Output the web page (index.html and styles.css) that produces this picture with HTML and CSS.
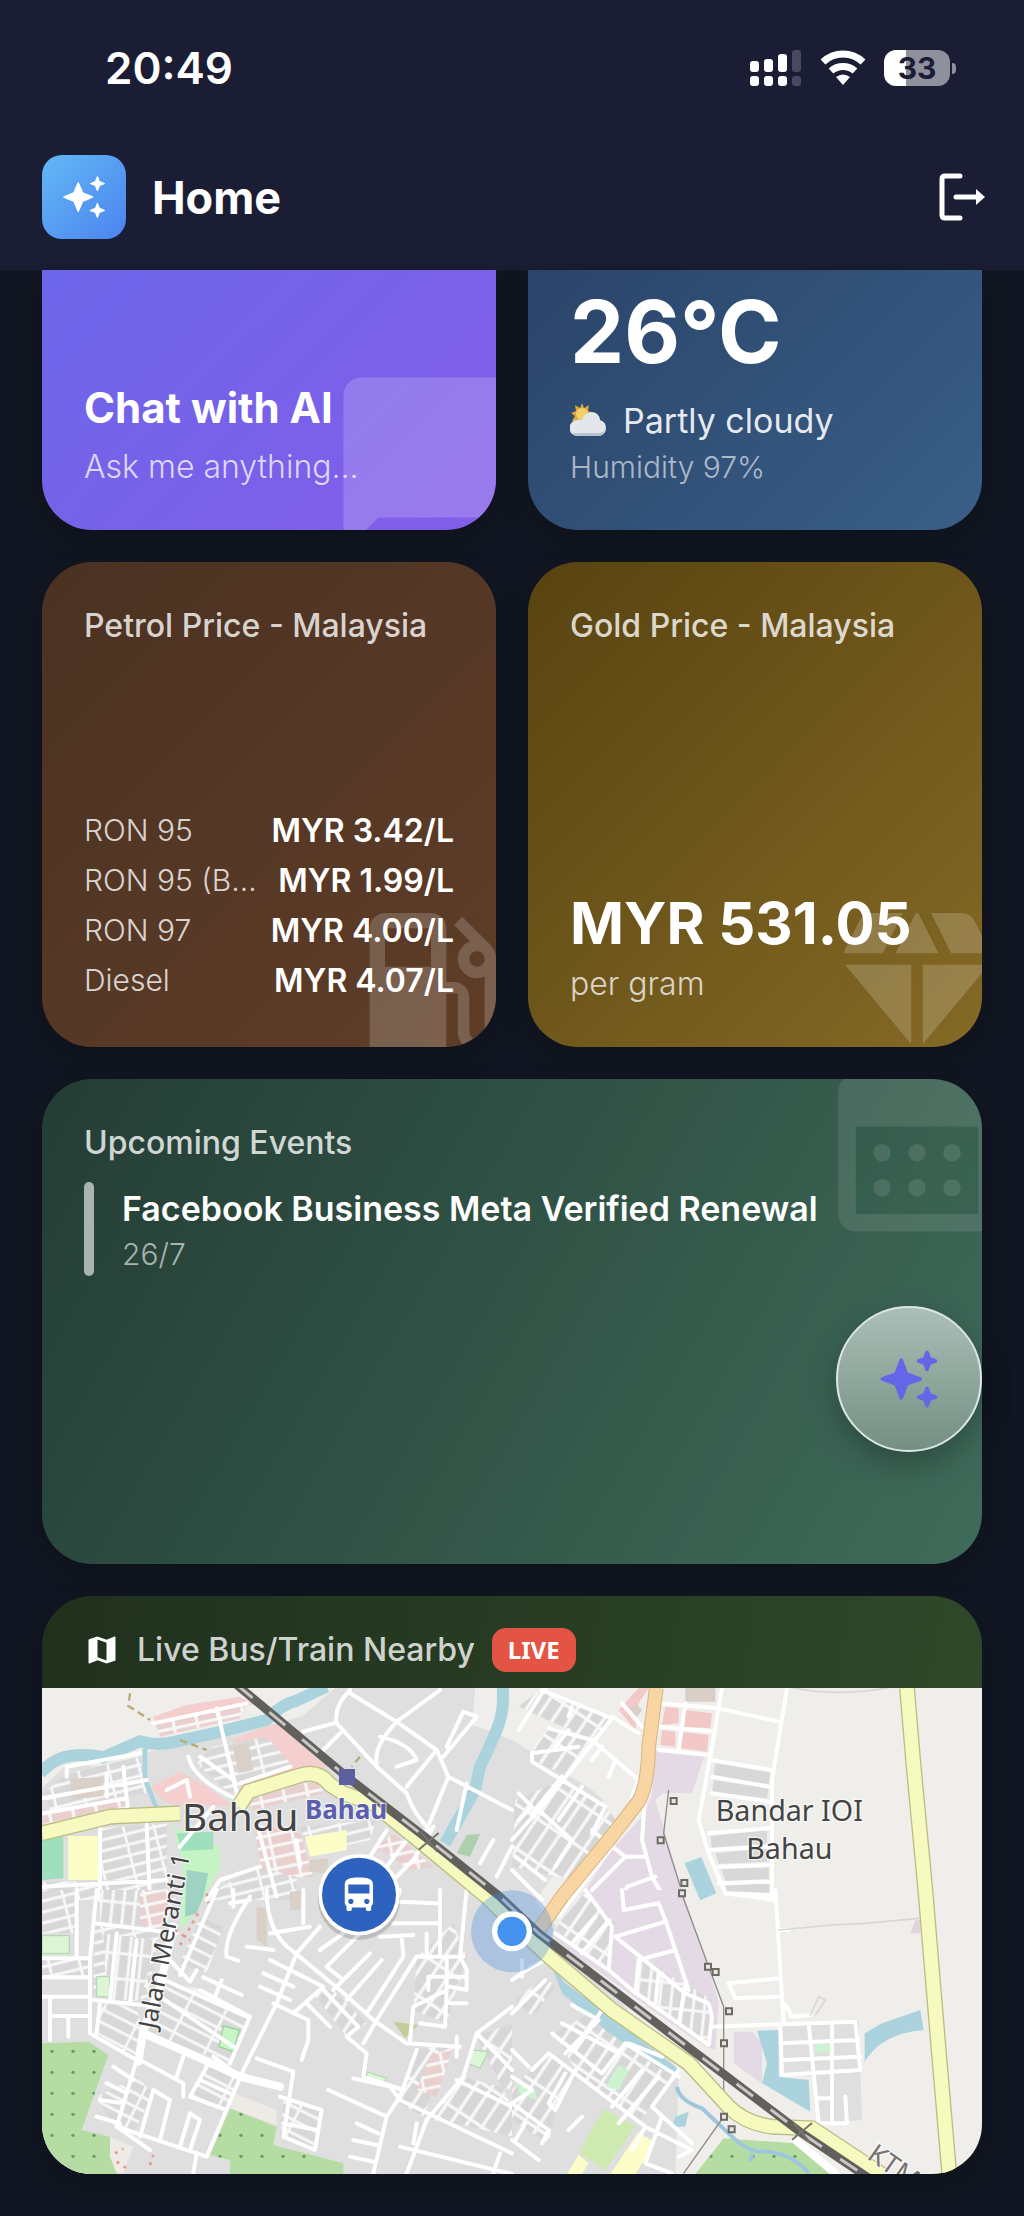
FILE: index.html
```html
<!DOCTYPE html>
<html lang="en">
<head>
  <meta charset="UTF-8">
  <meta name="viewport" content="width=device-width, initial-scale=1">
  <title>Home</title>
  <link rel="stylesheet" href="styles.css">
</head>
<body>

<header class="topbar">
  <div class="status">
    <span class="clock">20:49</span>
    <div class="status-icons">
      <svg width="52" height="36" viewBox="0 0 52 36">
        <g fill="#fff">
          <rect x="0" y="11" width="9" height="11" rx="3"/><rect x="14" y="9" width="9" height="13" rx="3"/><rect x="28" y="4" width="9" height="18" rx="3"/>
          <rect x="0" y="26" width="9" height="10" rx="3"/><rect x="14" y="26" width="9" height="10" rx="3"/><rect x="28" y="26" width="9" height="10" rx="3"/>
        </g>
        <g fill="#474960"><rect x="42" y="0" width="9" height="22" rx="3"/><rect x="42" y="26" width="9" height="10" rx="3"/></g>
      </svg>
      <svg width="46" height="36" viewBox="0 0 46 36">
        <g fill="none" stroke="#fff" stroke-width="7"><path d="M3 12a29 29 0 0 1 40 0"/><path d="M11 21a18 18 0 0 1 24 0"/></g>
        <path fill="#fff" d="M16 27q7-5 14 0l-7 8z"/>
      </svg>
      <div class="battery"><span>33</span></div>
    </div>
  </div>
  <nav class="nav">
    <div class="logo">
      <svg width="46" height="46" viewBox="0 0 24 24"><use href="#sparkles"/></svg>
    </div>
    <h1>Home</h1>
    <button class="logout" aria-label="Log out">
      <svg width="48" height="50" viewBox="0 0 48 50">
        <path d="M22 4H7Q4 4 4 7v36q0 3 3 3h15M18 25h20" fill="none" stroke="#fff" stroke-width="5" stroke-linecap="round"/>
        <path d="M38 17l9 8-9 8z" fill="#fff"/>
      </svg>
    </button>
  </nav>
</header>

<main class="cards">
  <section class="card under-bar chat">
    <svg class="mark big" viewBox="0 0 24 24"><path d="M20 2H4c-1.100 0-2 .9-2 2v18l4-4h14c1.100 0 2-.9 2-2V4c0-1.100-.9-2-2-2z"/></svg>
    <div class="foot">
      <h2 class="name">Chat with AI</h2>
      <p class="sub">Ask me anything...</p>
    </div>
  </section>

  <section class="card under-bar weather">
    <div class="foot">
      <p class="temp">26°C</p>
      <p class="sky">
        <svg width="36" height="36" viewBox="0 0 36 36">
          <path d="M12 0l2 5 5-3-1 6 6 2-5 3 2 5H8l-6 0 3-5-4-3 5-2-1-6 5 3z" fill="#d9a93f"/>
          <circle cx="12" cy="11" r="6" fill="#f6cf68"/>
          <path d="M8 33a8 8 0 0 1-1-16q3-1 5 0 2-7 9-8 8 0 9 8 6 2 6 8t-7 8z" fill="#e3e6ea"/>
          <path d="M2 29q3 4 8 4h18q6 0 8-6-3 3-8 3H9q-4 1-7-1z" fill="#b9c2cf"/>
        </svg>
        Partly cloudy
      </p>
      <p class="humidity">Humidity 97%</p>
    </div>
  </section>

  <section class="card petrol">
    <svg class="mark" viewBox="0 0 24 24"><path d="M19.770 7.230l.01-.01-3.720-3.720L15 4.560l2.110 2.110c-.94.36-1.610 1.260-1.610 2.330 0 1.380 1.120 2.500 2.500 2.500.36 0 .69-.08 1-.21v7.210c0 .55-.45 1-1 1s-1-.45-1-1V14c0-1.100-.9-2-2-2h-1V5c0-1.100-.9-2-2-2H6c-1.100 0-2 .9-2 2v16h10v-7.500h1.500v5c0 1.380 1.120 2.500 2.500 2.500s2.500-1.120 2.500-2.500V9c0-.69-.28-1.320-.73-1.770zM12 10H6V5h6v5zm6 0c-.55 0-1-.45-1-1s.45-1 1-1 1 .45 1 1-.45 1-1 1z"/></svg>
    <h2 class="title">Petrol Price - Malaysia</h2>
    <dl class="foot prices">
      <div><dt>RON 95</dt><dd>MYR 3.42/L</dd></div>
      <div><dt>RON 95 (B...</dt><dd>MYR 1.99/L</dd></div>
      <div><dt>RON 97</dt><dd>MYR 4.00/L</dd></div>
      <div><dt>Diesel</dt><dd>MYR 4.07/L</dd></div>
    </dl>
  </section>

  <section class="card gold">
    <svg class="mark" viewBox="0 0 24 24"><path d="M12.160 3h-.32L9.210 8.250h5.580zM16.460 8.250h5.160L19.550 4.110C19.210 3.430 18.520 3 17.760 3h-3.930zM21.380 9.750h-8.630V20.100zM11.250 20.100V9.750H2.620zM7.540 8.250L10.160 3H6.240c-.76 0-1.450.43-1.790 1.110L2.380 8.250z"/></svg>
    <h2 class="title">Gold Price - Malaysia</h2>
    <div class="foot">
      <p class="amount">MYR 531.05</p>
      <p class="sub">per gram</p>
    </div>
  </section>

  <section class="card wide events">
    <svg class="mark big top" viewBox="0 0 24 24"><path fill-rule="evenodd" d="M5 4h14a2 2 0 0 1 2 2v14a2 2 0 0 1-2 2H5a2 2 0 0 1-2-2V6a2 2 0 0 1 2-2zM5 10v10h14V10z"/><circle cx="8" cy="13" r="1"/><circle cx="12" cy="13" r="1"/><circle cx="16" cy="13" r="1"/><circle cx="8" cy="17" r="1"/><circle cx="12" cy="17" r="1"/><circle cx="16" cy="17" r="1"/></svg>
    <h2 class="title">Upcoming Events</h2>
    <div class="event">
      <h3>Facebook Business Meta Verified Renewal</h3>
      <p>26/7</p>
    </div>
  </section>

  <section class="card wide live">
    <div class="live-head">
      <svg width="36" height="36" viewBox="0 0 24 24"><path fill="#fff" d="M20.500 3l-.16.03L15 5.100 9 3 3.360 4.900c-.21.07-.36.25-.36.48V20.500c0 .28.22.5.5.5l.16-.03L9 18.900l6 2.100 5.640-1.900c.21-.07.36-.25.36-.48V3.500c0-.28-.22-.5-.5-.5zM15 19l-6-2.110V5l6 2.110V19z"/></svg>
      <h2 class="title">Live Bus/Train Nearby</h2>
      <span class="badge">LIVE</span>
    </div>

    <svg class="map" viewBox="0 0 2820 1458" preserveAspectRatio="xMidYMid slice" role="img" aria-label="Map of Bahau">
      <defs>
        <!-- rows of terraced houses -->
        <pattern id="rows" width="90" height="32" patternUnits="userSpaceOnUse" patternTransform="rotate(-14)"><rect width="90" height="32" fill="#f8f8f8"/><rect x="3" y="4" width="82" height="23" fill="#d9d8d8"/></pattern>
        <pattern id="slant" width="110" height="36" patternUnits="userSpaceOnUse" patternTransform="rotate(27)"><rect width="110" height="36" fill="#f8f8f8"/><rect x="3" y="4" width="102" height="27" fill="#d9d8d8"/></pattern>
        <pattern id="steep" width="110" height="42" patternUnits="userSpaceOnUse" patternTransform="rotate(-56)"><rect width="110" height="42" fill="#f8f8f8"/><rect x="4" y="5" width="100" height="32" fill="#d8d7d8"/></pattern>
        <pattern id="cols" width="34" height="76" patternUnits="userSpaceOnUse" patternTransform="rotate(6)"><rect width="34" height="76" fill="#f8f8f8"/><rect x="4" y="4" width="25" height="67" fill="#d9d8d8"/></pattern>
        <pattern id="shops" width="70" height="34" patternUnits="userSpaceOnUse" patternTransform="rotate(-12)"><rect width="70" height="34" fill="#f8f8f8"/><rect x="4" y="4" width="61" height="25" fill="#e9d0cf"/></pattern>
        <pattern id="trees" width="63" height="63" patternUnits="userSpaceOnUse"><rect width="63" height="63" fill="#b5dda3"/><circle cx="30" cy="43" r="5" fill="#6d9962"/></pattern>
      </defs>

      <rect width="2820" height="1458" fill="#f0eeea"/>
      <path class="town" d="M0 300L80 225 200 240 330 190 690 110 780 85 880 0H1300L1290 110 1410 156 1690 330 1480 640 1910 1146 1900 1458H0z"/>

      <!-- north west -->
      <g transform="translate(-126 -324)">
        <path class="pink" d="M460 410L560 375 720 350 760 372 470 440zM770 450L830 430 980 560 850 580 720 630 700 480zM450 620L540 575 620 620 700 680 500 670zM800 800L890 770 920 850 820 900z"/>
        <path fill="url(#shops)" d="M465 425L740 365 720 415 480 470zM130 700L380 650 390 695 130 740zM745 655L950 600 970 640 760 690zM760 730L900 760 940 890 790 900zM1130 800L1180 760 1300 860 1230 870z"/>
        <path fill="url(#rows)" d="M130 640L200 580 420 530 440 640 150 690zM590 550L640 500 800 470 880 560 720 610 690 640zM300 745L500 730 500 900 300 900zM126 905L500 900 500 960 126 960zM650 930L770 860 890 890 890 960 620 960zM900 740L1130 720 1110 780 930 820z"/>
        <path fill="#d9d0c8" d="M210 597L310 590V648L215 658zM698 498L745 488 760 570 715 580zM930 840L985 835 980 880 925 875z"/>
        <path fill="#9edfbd" d="M126 780L190 770V895L126 900z"/>
        <path fill="#fdfdc8" d="M205 768H300V900H205zM915 770L1040 750 1040 810 930 830z"/>
        <path fill="#c5f3c3" d="M520 740L660 800 660 860 600 980 540 1050 550 870z"/>
        <path fill="#9edfbd" d="M530 760L640 755V808L545 812z"/>
        <path fill="#9fd2c3" d="M560 870L625 880 610 950 590 1000 555 1010z"/>
        <path fill="#accfac" d="M1400 765L1440 762 1410 830 1370 820z"/>
        <path class="water" stroke-width="36" d="M120 580Q160 535 210 528T310 532L420 484Q470 500 530 484L640 460 800 420Q840 375 890 362L980 320"/>
        <path class="water" stroke-width="14" d="M435 505V600L470 685"/>
        <path class="water" stroke-width="36" d="M1508 320Q1515 390 1490 450T1440 560L1425 630 1335 790"/>
        <path class="street" d="M1050 330Q1000 380 1010 430L1130 560 1220 640Q1240 700 1290 750M1050 340L1190 425 1310 510 1345 590 1536 690M1190 425L1320 330M1190 425Q1120 500 1130 550M1140 470Q1230 490 1250 540L1190 560M1310 510L1220 620M1330 530L1430 410 1390 395 1340 500M1020 460L960 520M910 455L1000 430M1345 590L1280 750M1400 610L1370 750M1536 800L1490 890M1480 780L1440 850M1250 830L1190 890"/>
        <path class="street" d="M650 385L715 660M460 430L740 370M565 530Q580 600 715 660M370 560L385 700M126 655L440 600M200 590L200 560 420 520M320 580V650M600 530L700 600M500 630L560 600 570 650M720 610L870 560M130 700L380 655M300 740V960M440 735L450 960M126 920L500 900M770 730L830 950M640 680L540 800M890 780L900 860M780 860L660 900 620 960M1160 750L1110 830M1220 780L1160 860M1300 740L1240 840"/>
        <path class="track" d="M390 340L385 378 450 420M1080 530L1055 560M540 480L620 510"/>
      </g>

      <!-- south west -->
      <g transform="translate(-126 606)">
        <path fill="url(#rows)" d="M126 0H230V130H126zM126 200H270V260H126zM285 100L480 110 440 340 280 310z"/>
        <path fill="url(#cols)" d="M300 0H520L500 110 300 100zM310 130L470 150 420 330 320 330z"/>
        <path fill="url(#slant)" d="M470 260L600 300 750 380 690 520 430 430 410 350 300 340 290 430 410 510 480 350zM600 80L670 110 620 250 540 220zM620 530L720 560 680 660 570 620zM850 630L960 660 940 780 840 740zM290 620L410 560 460 610 400 730 340 710z"/>
        <path fill="url(#steep)" d="M1250 200L1360 100 1400 200 1340 400 1240 360zM940 310L1000 300 1100 400 1040 440zM1250 480L1350 460 1270 680 1200 640zM1430 440L1536 400V600L1390 560 1290 690 1370 700 1536 740V650z"/>
        <path fill="url(#shops)" d="M420 0H540L470 130 420 100zM1290 500L1360 470 1310 620 1250 600z"/>
        <path fill="url(#trees)" d="M126 460L265 455 325 495 245 720 330 740V800L355 852H126zM690 655L830 710 820 765 1030 820V852H690V810L630 795z"/>
        <path fill="#eeeae5" d="M700 610L830 660 830 705 690 655zM330 740L400 770 370 850H350L330 800z"/>
        <path fill="#dcf5d6" stroke="#a9d8a4" stroke-width="3" d="M126 137H208V190H126zM290 260H328V320H290zM1415 480L1465 485 1440 535 1405 520zM1100 545L1160 565 1150 585 1100 565z"/>
        <path fill="#c9f5c4" stroke="#9bd19b" stroke-width="4" d="M670 408L718 420 700 485 657 470z"/>
        <path fill="#c6cb9c" d="M1180 395L1255 405 1215 445z"/>
        <path fill="#d9d0c8" d="M770 50L800 55 800 170 770 150zM870 5L910 0 900 60 870 60z"/>
        <path class="street wide-street" d="M415 515L430 420 480 290 520 110M430 430L590 500 720 560 840 590"/>
        <path class="street" d="M620 800L730 540 830 340 890 190 960 110M126 205H270L290 0M270 205V430L410 510 350 710 620 800M230 0V200M126 262H265M126 320H270M150 320V450M205 380V440M150 378H260M285 100L530 130M280 330L480 350M300 340L290 430M350 130L330 330M410 150L390 340M500 200L570 275 590 240M600 300L750 380 690 520M470 260L740 380M480 320L700 470M540 255L650 0M610 262L725 315M665 270L645 320M420 510L550 580 550 620M550 500L530 560M620 530L570 620 680 660M600 570L690 610M640 500L720 560"/>
        <path class="street" d="M340 530L400 570M320 580L380 610M300 630L370 640M290 680L360 700M460 600L510 630 480 750M460 600L420 740M540 770L570 670 600 690 570 780M350 710L450 780M580 850L590 790M770 505L880 545 850 740 945 780 965 660 840 620M850 700L950 720M820 340L925 390 925 450 905 510M800 0Q800 130 880 185L1020 300 1120 390 1220 460 1380 470M680 200Q670 140 750 20M680 200L715 212M880 370L970 290 890 250M920 340L990 410M970 300L1075 410 1040 440M1040 440L1100 490 1090 560 1210 600M1060 565L1170 590 1200 630M1125 400L1090 460M985 600L1160 680 1120 850M1160 680L1200 620 1250 480M1200 630L1536 790M1500 790L1480 850M1200 770L1536 852M1070 700L1135 730M1060 750L1130 765M1050 800L1120 815M1280 690L1220 850M1250 700L1240 760"/>
        <path class="street" d="M1400 0L1380 200 1400 240 1400 300 1350 290M1250 200H1390M1250 200L1130 390M1205 140L1210 200 1100 370M1145 210L1040 330M1110 190L1000 300M1080 130L980 230 1030 270M1030 130L960 180M1280 130V190M1320 0V190M1200 35L1310 40M1180 100L1320 100M1140 140L1240 135M1340 200V300L1240 350 1230 450M1285 300V260L1400 260M1340 300L1335 410 1260 400M1350 340H1400M1536 350L1430 430 1390 560 1280 690M1430 430L1536 540M1370 570L1536 650M1370 440L1370 500M1200 0L1190 35M820 180L740 170M690 40L750 30M700 0L700 50M810 130L930 110M780 290L870 330M790 250L880 290M810 210L910 260M910 0V100"/>
        <path class="dots" d="M345 790L370 775M350 815L380 835M450 825L460 795M525 120L570 150M540 165L600 60M620 10L625 40"/>
      </g>

      <!-- north east -->
      <g transform="translate(1410 -324)">
        <path class="land" d="M170 570L230 500 350 600 370 680 310 690zM240 460L320 400 390 450 370 560z"/>
        <path fill="#e4dae6" d="M430 510L580 520 540 640 450 640 430 660 520 960H200L300 810 400 700 420 640z"/>
        <path fill="#f3c9c8" d="M460 380L500 385V430L450 435zM520 390L600 400 595 445 515 440zM450 450L490 455V500L445 495zM510 455L590 465 585 515 505 505zM320 390L380 324 410 324 380 370 370 450z"/>
        <path fill="#d9cfc7" d="M520 324H610V365H520zM370 370L390 390 375 410 355 385z"/>
        <path fill="#d9d8d8" d="M610 550L775 578 770 612 605 590zM605 600L770 625 765 655 600 635zM595 768L765 750V790L600 803zM610 820L765 805V845L620 852zM628 868L770 862V897L640 903zM640 917L772 910V940L650 944z"/>
        <path fill="url(#steep)" d="M90 324L300 410 240 480 20 380zM60 510L110 440 240 470 170 590 60 540zM10 660L150 600 280 680 320 730 180 900 0 860z"/>
        <path class="water" stroke-width="1" style="fill: #abd3de" d="M518 850L568 832 612 940 565 960z"/>
        <path class="street" d="M100 324L20 450M90 330L300 415 170 580 80 690 0 780M110 445L240 480 380 600 360 650M200 500L60 520 60 545 150 600 280 680 240 760M150 590L60 700M210 620L140 720M80 690L180 780 130 860M0 870L90 960M10 830L100 900M20 640L60 680 20 720M240 750L300 800 200 930M180 380L170 410M240 540L270 500M290 590L310 540M130 500L170 450M330 370L390 440M300 410L380 460"/>
        <path class="street" d="M630 324L600 500 560 720 590 820 640 940 790 960M825 324L780 600 780 960M440 370L620 385 800 425M440 510L590 525M520 370L500 510M445 440L610 455M600 540L780 570M600 590L770 620M600 640L770 665M590 760L770 745M590 810L770 800M620 860L770 855M620 910L770 905M400 640L390 780 420 890 460 960M300 800L340 830 400 830M340 830L240 930M330 960L345 920 430 890"/>
        <path class="power" d="M470 630L455 760 505 920"/>
        <path class="street thin" d="M845 324Q970 350 1130 324"/>
      </g>

      <!-- south east -->
      <g transform="translate(1410 606)">
        <path fill="#e4dae6" d="M180 60L300 0H510L590 230 620 340 610 480 580 470 420 360 130 150zM665 425L720 425 750 460 750 580 665 520z"/>
        <path class="town" d="M800 400L1040 390 1050 690 920 700 900 560 805 550z"/>
        <path fill="url(#steep)" d="M130 110L220 10 310 100 290 240 210 190zM10 330L100 260 130 290 60 380zM130 430L250 360 500 540 380 700 300 640 190 540zM0 600L100 490 200 550 130 660 110 760 0 690z"/>
        <path fill="url(#cols)" d="M380 210L520 280 600 330 590 470 360 310z"/>
        <path fill="#abd3de" d="M120 230L160 280 270 360 490 530 500 550 450 540 280 420 150 310zM735 422L800 420 800 560 890 570 895 665 750 580 765 520zM1058 430L1110 400 1225 360 1235 420Q1110 430 1058 515zM490 680L530 665 520 710 480 710z"/>
        <path fill="url(#trees)" d="M635 745L850 760 960 852H550z"/>
        <path fill="#cfeab0" d="M275 655L370 710 280 840 200 790z"/>
        <path fill="#fdfdc8" d="M380 725L430 760 370 852H295zM200 795L230 820 210 852H165z"/>
        <path fill="#cdf3d0" d="M320 525L350 540 320 600 280 590zM910 462H955V487H905zM20 580L70 600 75 630 20 610z"/>
        <path fill="#e0d5df" d="M1210 90H1225V130H1195z"/>
        <path class="water thin-water" d="M495 590Q500 630 570 655L660 740Q700 780 740 785 830 780 890 850M720 790L715 815"/>
        <path class="street" d="M790 0L815 400M800 120H830M650 280L800 265M650 280L670 325 810 320M600 410L1030 395 1045 540 810 555 805 410M890 400L920 700 1005 700 1000 620M960 400V690M805 460L1040 450M810 510L1045 500M820 345L840 380 895 375M920 625H960"/>
        <path class="street" d="M220 0L300 110 290 240 130 130M330 0L335 60 440 40 460 90 530 300M310 140L520 310 590 340 600 380 590 465 360 300 290 240M310 140L460 95M380 210L490 180M380 210L370 310M440 250L430 340M520 290L500 400M640 10L780 15M200 0L140 80M290 90L210 190M250 80L180 160M0 270L60 230 120 200M30 260V210M100 270L0 370M180 345L260 390 160 490M270 360L190 480M120 430L270 550 340 460 500 560M150 400L320 490M190 540L130 660 110 640 160 550M60 540L110 490 400 710 540 780 500 800M0 560L60 600 0 640M50 530L0 480M0 640L110 720 90 760M440 560L320 700M390 540L300 650M500 540L420 650 540 760M350 460L450 500M40 700L10 750M210 680L170 720M0 750L80 810M400 710L360 780M450 680L400 820 480 850"/>
        <path class="street wide-street" d="M850 750L970 850"/>
        <path class="street thin" d="M800 120L960 105 1060 100 1220 85M895 375L920 320 940 330 910 375"/>
        <path class="power" d="M505 0L590 230 635 350V680L515 850"/>
      </g>

      <!-- main roads -->
      <g class="yellow-road">
        <path class="edge" d="M0 436L204 386 414 376M589 356L620 310 774 262Q830 245 864 290L904 316 994 346 1154 476 1334 626 1510 796 1710 966 1940 1126 2060 1256Q2110 1306 2190 1316L2310 1321 2520 1460"/>
        <path d="M0 436L204 386 414 376M589 356L620 310 774 262Q830 245 864 290L904 316 994 346 1154 476 1334 626 1510 796 1710 966 1940 1126 2060 1256Q2110 1306 2190 1316L2310 1321 2520 1460"/>
        <path class="edge" d="M2595 0L2615 236 2650 606 2690 1086 2722 1460"/>
        <path d="M2595 0L2615 236 2650 606 2690 1086 2722 1460"/>
      </g>
      <path class="orange-road edge" d="M1843 0L1820 176Q1818 290 1790 340L1700 456 1560 626 1480 740"/>
      <path class="orange-road" d="M1843 0L1820 176Q1818 290 1790 340L1700 456 1560 626 1480 740"/>
      <path class="rail-bed" d="M584 -10L914 266 1174 466 1374 626 1490 736 1910 1056 2280 1336 2480 1470"/>
      <path class="rail-gap" d="M584 -10L914 266 1174 466 1374 626 1490 736 1910 1056 2280 1336 2480 1470"/>
      <path d="M2255 1305l50 60m-55-10l60-50M1130 485l60-50m-55-5l50 60" stroke="#77736c" stroke-width="6"/>
      <rect x="891" y="243" width="48" height="48" fill="#5d609f"/>
      <path fill="#e8e6e2" stroke="#6d6a66" stroke-width="6" d="M1886 330h18v18h-18zM1847 448h18v18h-18zM1918 576h18v18h-18zM1911 607h18v18h-18zM1989 827h18v18h-18zM2012 843h18v18h-18zM2052 961h18v18h-18zM2037 1057h18v18h-18zM2037 1277h18v18h-18zM2060 1315h18v18h-18z"/>

      <g class="labels">
        <text x="420" y="430" font-size="116">Bahau</text>
        <text class="station" x="789" y="392" font-size="78">Bahau</text>
        <text x="2242" y="400" font-size="86" text-anchor="middle">Bandar IOI</text>
        <text x="2242" y="512" font-size="86" text-anchor="middle">Bahau</text>
        <text transform="translate(342 1025) rotate(-79)" font-size="76">Jalan Meranti 1</text>
        <text class="line-name" transform="translate(2472 1410) rotate(35)" font-size="80">KTM</text>
      </g>

      <!-- own position -->
      <circle cx="1410" cy="730" r="123" fill="#4a90e2" fill-opacity=".35"/>
      <circle cx="1410" cy="730" r="60" fill="#fff"/>
      <circle cx="1410" cy="730" r="44" fill="#4592ee"/>

      <!-- bus -->
      <circle cx="951" cy="632" r="124" fill="#000" fill-opacity=".15"/>
      <circle cx="951" cy="620" r="122" fill="#fff"/>
      <circle cx="951" cy="620" r="111" fill="#2d62be"/>
      <path fill="#fff" transform="translate(887 558) scale(5.300)" d="M4 16c0 .88.39 1.670 1 2.220V20c0 .55.45 1 1 1h1c.55 0 1-.45 1-1v-1h8v1c0 .55.45 1 1 1h1c.55 0 1-.45 1-1v-1.780c.61-.55 1-1.340 1-2.220V6c0-3.500-3.580-4-8-4s-8 .5-8 4v10zm3.500 1c-.83 0-1.500-.67-1.500-1.500S6.670 14 7.500 14s1.500.67 1.500 1.500S8.330 17 7.500 17zm9 0c-.83 0-1.500-.67-1.500-1.500s.67-1.500 1.500-1.500 1.500.67 1.500 1.500-.67 1.500-1.500 1.500zm1.500-6H6V6h12v5z"/>
    </svg>
  </section>
</main>

<button class="fab" aria-label="Ask AI">
  <svg width="62" height="62" viewBox="0 0 24 24"><use href="#sparkles-round"/></svg>
</button>

<svg class="sprite" width="0" height="0">
  <symbol id="sparkles" viewBox="0 0 24 24">
    <path d="M9 4Q9.300 4 11.500 9.500 17 11.700 17 12T11.500 14.500Q9.300 20 9 20T6.500 14.500Q1 12.300 1 12T6.500 9.500Q8.700 4 9 4zM19 1Q19.300 1 20.250 3.750 23 4.700 23 5T20.250 6.250Q19.300 9 19 9T17.750 6.250Q15 5.300 15 5T17.750 3.750Q18.700 1 19 1zM19 15Q19.300 15 20.250 17.750 23 18.700 23 19T20.250 20.250Q19.300 23 19 23T17.750 20.250Q15 19.300 15 19T17.750 17.750Q18.700 15 19 15z"/>
  </symbol>
  <symbol id="sparkles-round" viewBox="0 0 24 24">
    <path d="M9 4.700L11 10 16.300 12 11 14 9 19.300 7 14 1.700 12 7 10zM19 1.700L19.900 4.100 22.300 5 19.900 5.900 19 8.300 18.100 5.900 15.700 5 18.100 4.100zM19 15.700L19.900 18.100 22.300 19 19.900 19.900 19 22.300 18.100 19.900 15.700 19 18.100 18.100z" stroke="#6565e8" stroke-width="1.400" stroke-linejoin="round"/>
  </symbol>
</svg>

</body>
</html>
```

FILE: styles.css
```css
* {
  box-sizing: border-box;
}

body {
  margin: 0;
  background: #111622;
  color: #fff;
  font-family: Inter, "Liberation Sans", sans-serif;
}

h1, h2, h3, p, dl, dd {
  margin: 0;
}

button {
  border: none;
  padding: 0;
  background: none;
  cursor: pointer;
}

svg {
  display: block;
  flex: none;
}

.sprite {
  position: absolute;
}

/* top bar */
.topbar {
  background: #1a1d33;
  height: 270px;
  padding: 38px 42px 0;
}

.status {
  display: flex;
  justify-content: space-between;
  align-items: center;
  height: 60px;
  padding: 0 24px 0 63px;
}

.clock {
  font-size: 44px;
  font-weight: 600;
}

.status-icons {
  display: flex;
  align-items: center;
  gap: 18px;
}

.battery {
  position: relative;
  width: 66px;
  height: 36px;
  margin-right: 8px;
  border-radius: 12px;
  background: linear-gradient(90deg, #fff 33%, #8e909e 33%);
  color: #1a1d33;
  font-size: 30px;
  font-weight: 700;
  line-height: 36px;
  text-align: center;
}

.battery::after {
  content: "";
  position: absolute;
  right: -6px;
  top: 13px;
  width: 4px;
  height: 11px;
  border-radius: 0 5px 5px 0;
  background: #8e909e;
}

.nav {
  display: flex;
  align-items: center;
  gap: 26px;
  margin-top: 57px;
}

.logo {
  display: grid;
  place-items: center;
  width: 84px;
  height: 84px;
  border-radius: 20px;
  background: linear-gradient(135deg, #62b8f5, #4b83ee);
  fill: #fff;
}

.nav h1 {
  font-size: 45px;
  font-weight: 700;
}

.logout {
  margin-left: auto;
  margin-right: -4px;
}

/* cards */
.cards {
  display: grid;
  grid-template-columns: 1fr 1fr;
  gap: 32px;
  padding: 0 42px 42px;
}

.card {
  position: relative;
  display: flex;
  flex-direction: column;
  min-width: 0;
  min-height: 485px;
  padding: 42px;
  border-radius: 50px;
  overflow: hidden;
  box-shadow: 0 10px 30px rgba(0, 0, 0, 0.2);
}

.under-bar {
  min-height: 260px;
  padding-top: 0;
  border-radius: 0 0 50px 50px;
}

.wide {
  grid-column: 1 / -1;
}

.chat {
  background: linear-gradient(135deg, #6c66ea, #845de9);
}

.weather {
  background: linear-gradient(135deg, #2b4469, #395f88);
}

.petrol {
  background: linear-gradient(135deg, #4a3121, #603e29);
}

.gold {
  background: linear-gradient(135deg, #584310, #856a26);
}

.events {
  background: linear-gradient(120deg, #243d34, #3f6b5a);
}

.mark {
  position: absolute;
  right: -27px;
  bottom: -27px;
  width: 184px;
  height: 184px;
  fill: #fff;
  opacity: 0.18;
}

.mark.big {
  right: -40px;
  bottom: -40px;
  width: 210px;
  height: 210px;
}

.mark.top {
  top: -40px;
  opacity: 0.1;
}

.foot {
  position: relative;
  margin-top: auto;
}

.title {
  color: rgba(255, 255, 255, 0.8);
  font-size: 32px;
  font-weight: 500;
  line-height: 44px;
}

.name {
  font-size: 42px;
  font-weight: 700;
  line-height: 56px;
}

.sub {
  color: rgba(255, 255, 255, 0.75);
  font-size: 32px;
  font-weight: 300;
  line-height: 42px;
}

.chat .name {
  margin-bottom: 10px;
}

.temp {
  margin-bottom: 16px;
  font-size: 86px;
  font-weight: 700;
  line-height: 96px;
}

.sky {
  display: flex;
  align-items: center;
  gap: 17px;
  color: rgba(255, 255, 255, 0.9);
  font-size: 34px;
  line-height: 50px;
}

.humidity {
  color: rgba(255, 255, 255, 0.6);
  font-size: 30px;
  font-weight: 300;
  line-height: 42px;
}

.prices div {
  display: flex;
  justify-content: space-between;
  align-items: center;
  height: 50px;
}

.prices dt {
  color: rgba(255, 255, 255, 0.8);
  font-size: 30px;
  font-weight: 300;
}

.prices dd {
  font-size: 32px;
  font-weight: 600;
}

.amount {
  margin-bottom: 4px;
  font-size: 58px;
  font-weight: 700;
  line-height: 72px;
}

.event {
  position: relative;
  margin-top: 17px;
  padding: 6px 0 0 38px;
  height: 94px;
}

.event::before {
  content: "";
  position: absolute;
  left: 0;
  top: 0;
  width: 10px;
  height: 94px;
  border-radius: 5px;
  background: #a9b4b0;
}

.event h3 {
  font-size: 34px;
  font-weight: 600;
  line-height: 42px;
}

.event p {
  color: rgba(255, 255, 255, 0.6);
  font-size: 30px;
  font-weight: 300;
  line-height: 48px;
}

/* live map */
.live {
  padding: 0;
  background: linear-gradient(100deg, #20301d, #2f4a2a);
}

.live-head {
  display: flex;
  align-items: center;
  gap: 17px;
  height: 92px;
  padding: 16px 42px 0;
}

.badge {
  padding: 0 16px;
  border-radius: 14px;
  background: #e35444;
  font-family: "Noto Sans", sans-serif;
  font-size: 24px;
  font-weight: 700;
  line-height: 44px;
}

.map {
  width: 100%;
  height: auto;
  aspect-ratio: 940 / 486;
}

.town {
  fill: #e0dfdf;
}

.land {
  fill: #f0eeea;
}

.pink {
  fill: #f4cfce;
}

.water {
  fill: none;
  stroke: #abd3de;
}

.thin-water {
  stroke: #9fc6dd;
  stroke-width: 12;
}

.street {
  fill: none;
  stroke: #fff;
  stroke-width: 12;
  stroke-linejoin: round;
  stroke-linecap: round;
}

.wide-street {
  stroke-width: 24;
}

.thin {
  stroke: #d9d7d3;
  stroke-width: 5;
}

.track {
  fill: none;
  stroke: #b8a978;
  stroke-width: 7;
  stroke-dasharray: 22 14;
}

.dots {
  fill: none;
  stroke: #e79b8b;
  stroke-width: 8;
  stroke-dasharray: 9 16;
}

.power {
  fill: none;
  stroke: #8f8c88;
  stroke-width: 4;
}

.yellow-road path {
  fill: none;
  stroke: #f6fabf;
  stroke-width: 40;
}

.yellow-road .edge {
  stroke: #bcbd84;
  stroke-width: 48;
}

.orange-road {
  fill: none;
  stroke: #f8d5a3;
  stroke-width: 38;
}

.orange-road.edge {
  stroke: #d9b47d;
  stroke-width: 44;
}

.rail-bed {
  fill: none;
  stroke: #62605d;
  stroke-width: 26;
}

.rail-gap {
  fill: none;
  stroke: #c9c7c4;
  stroke-width: 9;
  stroke-dasharray: 62 66;
}

.labels {
  fill: #444;
  stroke: rgba(255, 255, 255, 0.6);
  stroke-width: 8;
  paint-order: stroke;
  font-family: "Noto Sans", sans-serif;
}

.labels .station {
  fill: #5a5fae;
  font-weight: 700;
}

.labels .line-name {
  fill: #77746f;
}

.fab {
  position: fixed;
  right: 42px;
  bottom: 764px;
  display: grid;
  place-items: center;
  width: 146px;
  height: 146px;
  border: 2px solid #dde6e2;
  border-radius: 50%;
  background: linear-gradient(180deg, #abbfb7, #748f83);
  fill: #6565e8;
  box-shadow: 0 12px 30px rgba(0, 0, 0, 0.25);
}
```
